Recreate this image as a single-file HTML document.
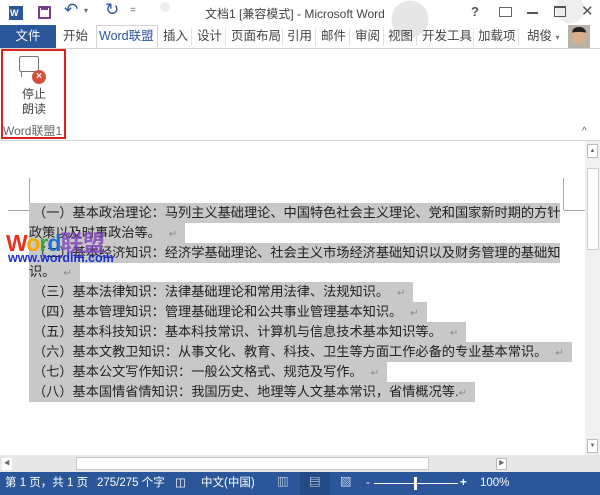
<!DOCTYPE html>
<html><head><meta charset="utf-8"><style>
*{margin:0;padding:0;box-sizing:border-box}
body{width:600px;height:495px;overflow:hidden;background:#fff;font-family:"Liberation Sans","Noto Sans CJK SC",sans-serif;position:relative;color:#444}
.a{position:absolute;white-space:nowrap}
.tab{position:absolute;top:25px;height:23px;line-height:23px;font-size:12.5px;color:#444}
.sep{position:absolute;top:28px;width:1px;height:18px;background:#e2e2e2}
.ln{position:absolute;left:29px;height:20px;line-height:20px;font-size:13.2px;color:#222;background:#c8c8c8;padding-left:4px;white-space:nowrap}
.ln i{font-style:normal;color:#888;font-size:10px;margin-left:8px;margin-right:8px}
.st{position:absolute;top:472px;height:23px;line-height:23px;font-size:11.5px;color:#fff}
</style></head><body>
<div class="a" style="left:380px;top:0;width:60px;height:48px;background:radial-gradient(circle at 50% 40%,#e6e6e6 0 18px,transparent 19px)"></div>
<div class="a" style="left:540px;top:0;width:60px;height:30px;background:radial-gradient(circle at 50% 30%,#eee 0 14px,transparent 15px)"></div>
<div class="a" style="left:160px;top:2px;width:10px;height:10px;border-radius:5px;background:#eee"></div>
<div class="a" style="left:9px;top:6px;width:14px;height:14px;background:#2b579a;color:#fff;font-size:9px;line-height:14px;font-weight:bold;padding-left:1px">W</div>
<div class="a" style="left:38px;top:6px;width:13px;height:13px;border:2px solid #7a3d8a;border-radius:1px"></div>
<div class="a" style="left:41px;top:6px;width:7px;height:4px;background:#7a3d8a"></div>
<div class="a" style="left:64px;top:0;font-size:17px;color:#2b579a">↶</div>
<div class="a" style="left:84px;top:6px;font-size:8px;color:#666">▾</div>
<div class="a" style="left:105px;top:0;font-size:17px;color:#2b579a">↻</div>
<div class="a" style="left:130px;top:5px;font-size:10px;color:#666">=</div>
<div class="a" style="left:205px;top:5px;font-size:12px;color:#444">文档1 [兼容模式] - Microsoft Word</div>
<div class="a" style="left:471px;top:4px;font-size:13px;color:#555;font-weight:bold">?</div>
<div class="a" style="left:499px;top:7px;width:13px;height:10px;border:1px solid #666"></div>
<div class="a" style="left:527px;top:12px;width:11px;height:2px;background:#555"></div>
<div class="a" style="left:554px;top:6px;width:12px;height:11px;border:1px solid #555;border-top-width:2px"></div>
<div class="a" style="left:581px;top:2px;font-size:15px;color:#555">✕</div>
<div class="a" style="left:0;top:25px;width:56px;height:23px;background:#2b579a;color:#fff;font-size:12.5px;line-height:23px;text-align:center">文件</div>
<div class="tab" style="left:63px">开始</div>
<div class="a" style="left:96px;top:25px;width:62px;height:24px;border:1px solid #d4d4d4;border-bottom:none;background:#fff"></div>
<div class="tab" style="left:99px;color:#2b579a">Word联盟</div>
<div class="tab" style="left:163px">插入</div><div class="sep" style="left:191px"></div>
<div class="tab" style="left:197px">设计</div><div class="sep" style="left:225px"></div>
<div class="tab" style="left:231px">页面布局</div><div class="sep" style="left:282px"></div>
<div class="tab" style="left:287px">引用</div><div class="sep" style="left:315px"></div>
<div class="tab" style="left:321px">邮件</div><div class="sep" style="left:349px"></div>
<div class="tab" style="left:355px">审阅</div><div class="sep" style="left:383px"></div>
<div class="tab" style="left:388px">视图</div><div class="sep" style="left:416px"></div>
<div class="tab" style="left:422px">开发工具</div><div class="sep" style="left:473px"></div>
<div class="tab" style="left:478px">加载项</div><div class="sep" style="left:518px"></div>
<div class="tab" style="left:527px">胡俊 <span style="font-size:8px;color:#777">▾</span></div>
<div class="a" style="left:568px;top:25px;width:22px;height:23px;background:#b8b2a8"></div>
<div class="a" style="left:572px;top:27px;width:14px;height:17px;border-radius:6px;background:#d9b08c;border-top:5px solid #222"></div>
<div class="a" style="left:0;top:48px;width:600px;height:1px;background:#d4d4d4"></div>
<div class="a" style="left:0;top:140px;width:600px;height:1px;background:#d4d4d4"></div>
<div class="a" style="left:1px;top:49px;width:65px;height:90px;border:2px solid #e02020"></div>
<div class="a" style="left:19px;top:56px;width:20px;height:16px;border:1.5px solid #777;border-radius:2px"></div>
<div class="a" style="left:21px;top:71px;width:5px;height:6px;border-left:1.5px solid #777"></div>
<div class="a" style="left:32px;top:70px;width:14px;height:14px;border-radius:7px;background:#d2533a;color:#fff;font-size:10px;line-height:14px;text-align:center;font-weight:bold">×</div>
<div class="a" style="left:22px;top:87px;font-size:12px;color:#444;line-height:15px;text-align:center">停止<br>朗读</div>
<div class="a" style="left:3px;top:122px;font-size:12px;color:#666">Word联盟1</div>
<div class="a" style="left:582px;top:126px;font-size:10px;color:#555">^</div>
<div class="a" style="left:29px;top:178px;width:1px;height:32px;background:#aaa"></div>
<div class="a" style="left:8px;top:210px;width:21px;height:1px;background:#aaa"></div>
<div class="a" style="left:563px;top:178px;width:1px;height:32px;background:#aaa"></div>
<div class="a" style="left:564px;top:210px;width:21px;height:1px;background:#aaa"></div>
<div class="ln" style="top:203px;width:531px">（一）基本政治理论：马列主义基础理论、中国特色社会主义理论、党和国家新时期的方针</div>
<div class="ln" style="top:223px;padding-left:0">政策以及时事政治等。<i>↵</i></div>
<div class="ln" style="top:243px;width:531px">（二）基本经济知识：经济学基础理论、社会主义市场经济基础知识以及财务管理的基础知</div>
<div class="ln" style="top:262px;padding-left:0">识。<i>↵</i></div>
<div class="ln" style="top:282px">（三）基本法律知识：法律基础理论和常用法律、法规知识。<i>↵</i></div>
<div class="ln" style="top:302px">（四）基本管理知识：管理基础理论和公共事业管理基本知识。<i>↵</i></div>
<div class="ln" style="top:322px">（五）基本科技知识：基本科技常识、计算机与信息技术基本知识等。<i>↵</i></div>
<div class="ln" style="top:342px">（六）基本文教卫知识：从事文化、教育、科技、卫生等方面工作必备的专业基本常识。<i>↵</i></div>
<div class="ln" style="top:362px">（七）基本公文写作知识：一般公文格式、规范及写作。<i>↵</i></div>
<div class="ln" style="top:382px">（八）基本国情省情知识：我国历史、地理等人文基本常识，省情概况等.<i style="margin-left:0">↵</i></div>
<div class="a" style="left:6px;top:224px;font-size:23px;font-weight:bold;letter-spacing:-1px"><span style="color:#e8321e">W</span><span style="color:#f2a900">o</span><span style="color:#3aa53a">r</span><span style="color:#1e6fd0">d</span><span style="color:#7f3fbf;opacity:.8">联盟</span></div>
<div class="a" style="left:8px;top:251px;font-size:12.5px;color:#1a2fd0;font-weight:bold">www.wordlm.com</div>
<div class="a" style="left:585px;top:141px;width:15px;height:314px;background:#f0f0f0"></div>
<div class="a" style="left:587px;top:144px;width:11px;height:14px;border:1px solid #bbb;background:#fff;font-size:6px;text-align:center;line-height:12px;color:#666">▲</div>
<div class="a" style="left:587px;top:168px;width:12px;height:82px;border:1px solid #ccc;background:#fff"></div>
<div class="a" style="left:587px;top:439px;width:11px;height:14px;border:1px solid #bbb;background:#fff;font-size:6px;text-align:center;line-height:12px;color:#666">▼</div>
<div class="a" style="left:0;top:455px;width:600px;height:17px;background:#e8e8e8"></div>
<div class="a" style="left:2px;top:458px;width:10px;height:12px;background:#fff;font-size:6px;line-height:12px;text-align:center;color:#666">◀</div>
<div class="a" style="left:76px;top:457px;width:353px;height:13px;border:1px solid #c8c8c8;background:#fff"></div>
<div class="a" style="left:496px;top:458px;width:11px;height:12px;border:1px solid #bbb;background:#fff;font-size:6px;line-height:10px;text-align:center;color:#666">▶</div>
<div class="a" style="left:0;top:472px;width:600px;height:23px;background:#2b579a"></div>
<div class="a" style="left:300px;top:472px;width:30px;height:23px;background:#234a85"></div>
<div class="st" style="left:5px">第 1 页，共 1 页</div>
<div class="st" style="left:97px">275/275 个字</div>
<div class="st" style="left:175px">◫</div>
<div class="st" style="left:201px">中文(中国)</div>
<div class="st" style="left:277px">▥</div>
<div class="st" style="left:309px">▤</div>
<div class="st" style="left:340px">▧</div>
<div class="st" style="left:366px">-</div>
<div class="a" style="left:374px;top:483px;width:84px;height:1px;background:#fff"></div>
<div class="a" style="left:414px;top:477px;width:3px;height:13px;background:#fff"></div>
<div class="st" style="left:460px;font-weight:bold">+</div>
<div class="st" style="left:480px">100%</div>
</body></html>
